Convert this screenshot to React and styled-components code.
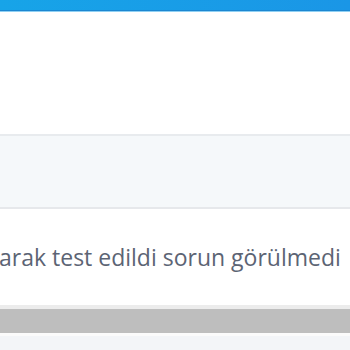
import React from "react";
import styled, { createGlobalStyle } from "styled-components";

const Global = createGlobalStyle`
  html, body { margin: 0; padding: 0; background: #fff; }
  body { font-family: "Open Sans", "Liberation Sans", sans-serif; overflow: hidden; }
`;

const Page = styled.div`
  width: 350px;
  height: 350px;
  display: flex;
  flex-direction: column;
  overflow: hidden;
`;

const TopBar = styled.div`
  flex: none;
  height: 10px;
  background: linear-gradient(90deg, #17a4e8 0%, #1a96e6 100%);
  border-bottom: 1px solid #1c86d0;
  box-shadow: 0 1px 0 #8fd0f3;
`;

const Spacer = styled.div`
  height: ${(p) => p.h}px;
  flex: none;
`;

const Band = styled.div`
  flex: none;
  height: 71px;
  background: #f5f8fa;
  border-top: 2px solid #e8ebee;
  border-bottom: 2px solid #e6e8eb;
`;

const Message = styled.div`
  flex: none;
  height: 32px;
  line-height: 32px;
  white-space: nowrap;
  font-size: 23px;
  color: #5c6474;
  margin-left: -1px;
`;

const FooterBar = styled.div`
  flex: none;
  height: 24px;
  background: #bebebe;
  border-top: 4px solid #ececec;
  border-bottom: 3px solid #fbfbfb;
`;

const FooterRest = styled.div`
  flex: 1;
  background: #f3f5f8;
`;

export default function App() {
  return (
    <Page>
      <Global />
      <TopBar />
      <Spacer h={123} />
      <Band />
      <Spacer h={32} />
      <Message>arak test edildi sorun görülmedi</Message>
      <Spacer h={32} />
      <FooterBar />
      <FooterRest />
    </Page>
  );
}
